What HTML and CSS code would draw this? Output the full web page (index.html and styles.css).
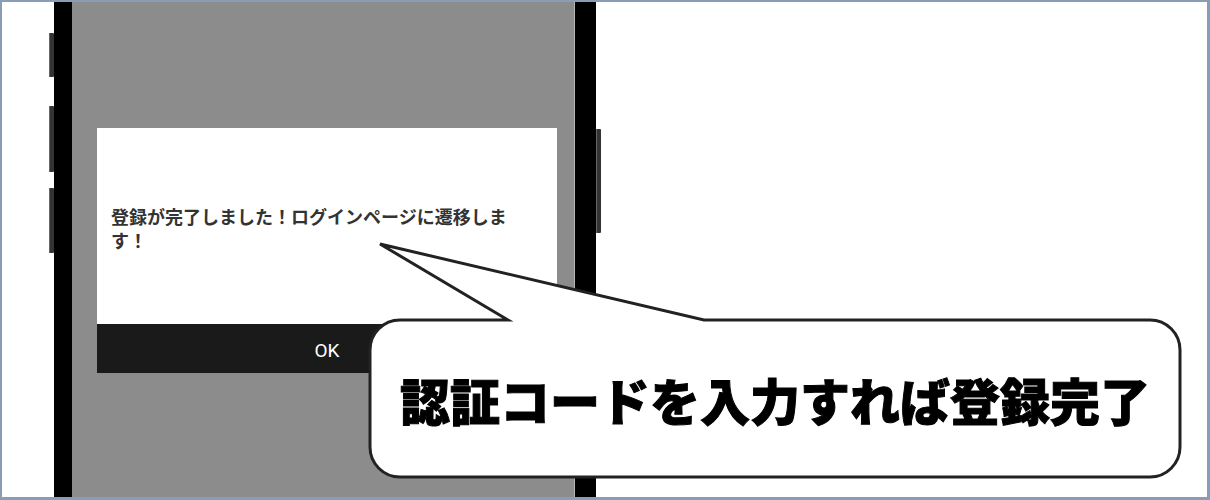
FILE: index.html
```html
<!DOCTYPE html>
<html lang="ja">
<head>
<meta charset="utf-8">
<title>登録完了</title>
<link rel="stylesheet" href="styles.css">
</head>
<body>
<div class="frame">
  <div class="phone">
    <span class="btn btn-l1"></span>
    <span class="btn btn-l2"></span>
    <span class="btn btn-l3"></span>
    <span class="btn btn-r1"></span>
    <div class="screen">
      <div class="dialog">
        <div class="dialog-body">
          <p class="dialog-msg">登録が完了しました！ログインページに遷移します！</p>
        </div>
        <div class="dialog-ok">OK</div>
      </div>
    </div>
  </div>
  <svg class="bubble-shape" viewBox="360 235 830 250" width="830" height="250" aria-hidden="true">
    <path d="M508 320 L380 244 L704 320 H1150 A30 30 0 0 1 1180 350 V447 A30 30 0 0 1 1150 477 H400 A30 30 0 0 1 370 447 V350 A30 30 0 0 1 400 320 Z" fill="#fff" stroke="#222" stroke-width="3" stroke-linejoin="miter"/>
  </svg>
  <div class="bubble-text">認証コードを入力すれば登録完了</div>
</div>
</body>
</html>
```

FILE: styles.css
```css
html, body {
  margin: 0;
  padding: 0;
  background: #fff;
}

.frame {
  position: relative;
  width: 1210px;
  height: 500px;
  box-sizing: border-box;
  border-style: solid;
  border-color: #8b9cb6;
  border-width: 2px 3px 3px 2px;
  overflow: hidden;
  background: #fff;
  font-family: "Noto Sans CJK JP", "Noto Sans", sans-serif;
}

.phone {
  position: relative;
  margin-left: 52px;
  width: 542px;
  height: 100%;
  box-sizing: border-box;
  background: #000;
  padding: 0 21px 0 18px;
}

.btn {
  position: absolute;
  width: 5px;
  background: #333;
  border-radius: 1px;
  box-shadow: inset 1px 0 0 #666;
}
.btn-l1 { left: -5px; top: 31px; height: 44px; }
.btn-l2 { left: -5px; top: 104px; height: 66px; }
.btn-l3 { left: -5px; top: 186px; height: 65px; }
.btn-r1 { right: -5px; top: 127px; height: 104px; }

.screen {
  height: 100%;
  background: #8c8c8c;
  box-shadow: inset -1px 0 0 #b5b5b5;
  padding: 126px 18px 0 25px;
  box-sizing: border-box;
}

.dialog {
  width: 460px;
}

.dialog-body {
  height: 196px;
  box-sizing: border-box;
  background: #fff;
  padding: 76px 36px 0 14px;
}

.dialog-msg {
  margin: 0;
  font-size: 18px;
  line-height: 24px;
  font-weight: 700;
  color: #333;
}

.dialog-ok {
  height: 49px;
  box-sizing: border-box;
  padding-top: 3px;
  background: #1a1a1a;
  color: #fff;
  display: flex;
  align-items: center;
  justify-content: center;
  font-family: Roboto, "Noto Sans", sans-serif;
  font-size: 19px;
}

.bubble-shape {
  position: absolute;
  left: 358px;
  top: 233px;
}

.bubble-text {
  position: absolute;
  left: 368px;
  top: 318px;
  width: 810px;
  height: 157px;
  display: flex;
  align-items: center;
  justify-content: center;
  font-family: "Noto Sans CJK JP", sans-serif;
  font-weight: 900;
  font-size: 50px;
  color: #000;
  -webkit-text-stroke: 1px #000;
  letter-spacing: 0;
}
```
